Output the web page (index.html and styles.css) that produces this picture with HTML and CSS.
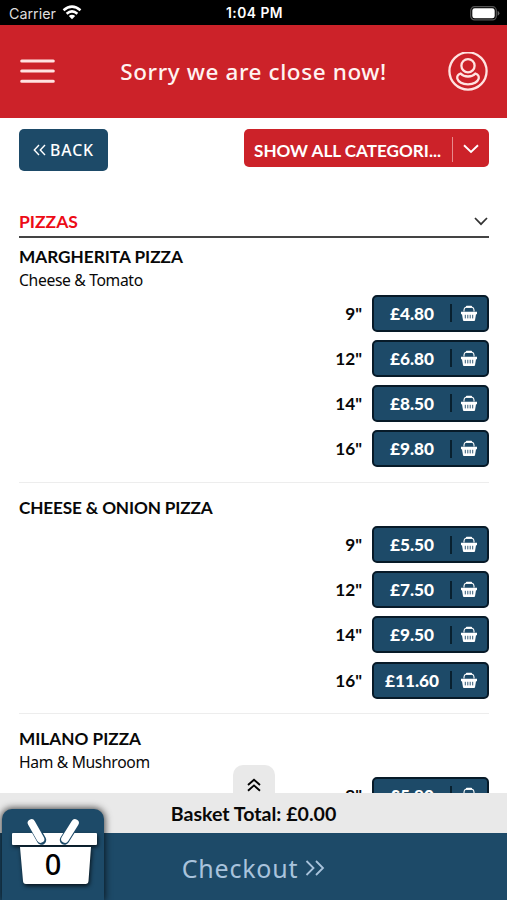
FILE: index.html
```html
<!DOCTYPE html>
<html lang="en">
<head>
<meta charset="utf-8">
<title>Menu</title>
<link rel="stylesheet" href="styles.css">
</head>
<body>
<svg width="0" height="0" class="defs">
  <symbol id="basket" viewBox="0 0 18 17">
    <path d="M4 6.5V5Q4 2.6 6 2.2H12Q14 2.6 14 5V6.5" fill="none" stroke="currentColor" stroke-width="1.1"/>
    <path d="M6.8 1.7H11.2" stroke="currentColor" stroke-width="1.9" stroke-linecap="round"/>
    <path d="M1 6.7H17V9.2H16L15 15.2Q14.9 16 14 16H4Q3.1 16 3 15.2L2 9.2H1Z" fill="currentColor"/>
    <path d="M5.3 9.8V13.4M7.8 9.8V13.4M10.2 9.8V13.4M12.7 9.8V13.4" stroke="#1d4a68" stroke-width=".9"/>
  </symbol>
</svg>
<div class="screen">
  <div class="status">
    <div class="carrier">Carrier
      <svg width="20" height="15" viewBox="0 0 20 15" fill="none" stroke="#fff" stroke-width="2.5"><path d="M1.5 5.3Q10-2.1 18.5 5.3M4.6 8.7Q10 4.1 15.4 8.7"/><path d="M6.8 11.1Q10 8.3 13.2 11.1L10 14.3Z" fill="#fff" stroke="none"/></svg>
    </div>
    <div class="clock">1:04 PM</div>
    <svg class="battery" width="30" height="15" viewBox="0 0 30 15"><rect x=".7" y=".7" width="25.6" height="13.2" rx="3.8" fill="none" stroke="#555" stroke-width="1.2"/><rect x="2.3" y="2.3" width="22.4" height="10" rx="2.4" fill="#fff"/><path d="M27.6 5Q29.4 5.5 29.4 7.3T27.6 9.8Z" fill="#666"/></svg>
  </div>
  <header class="header">
    <svg width="35" height="25" viewBox="0 0 35 25" stroke="#ffe3e1" stroke-width="3" stroke-linecap="round"><path d="M1.7 2H33.3M1.7 12.1H33.3M1.7 22.2H33.3"/></svg>
    <h1>Sorry we are close now!</h1>
    <svg width="40" height="40" viewBox="0 0 40 40" fill="none" stroke="#ffe3e1" stroke-width="2.3"><circle cx="20" cy="19" r="18.6"/><circle cx="20" cy="13.7" r="6.6"/><path d="M12.6 21.5C10 22.4 8.9 24.4 9.3 26.7C10.5 30.2 15 32.3 20 32.3S29.5 30.2 30.7 26.7C31.1 24.4 30 22.4 27.4 21.5C25.7 23.5 23.2 24.5 20 24.5S14.3 23.5 12.6 21.5Z"/></svg>
  </header>
  <main class="content">
    <div class="toolbar">
      <button class="back"><svg width="13" height="12" viewBox="0 0 13 12" fill="none" stroke="#fff" stroke-width="1.4"><path d="M6 1L1.3 6L6 11M12 1L7.3 6L12 11"/></svg><span>BACK</span></button>
      <button class="select"><span>SHOW ALL CATEGORI...</span><i></i><svg width="16" height="10" viewBox="0 0 16 10" fill="none" stroke="#fff" stroke-width="1.9"><path d="M1 1.3L8 8L15 1.3"/></svg></button>
    </div>
    <div class="category"><h2>PIZZAS</h2><svg width="14" height="9" viewBox="0 0 14 9" fill="none" stroke="#333" stroke-width="1.7"><path d="M1 1L7 7.2L13 1"/></svg></div>
    <section class="item first">
      <h3>MARGHERITA PIZZA</h3>
      <p>Cheese &amp; Tomato</p>
      <div class="options">
        <div class="option"><span>9"</span><button><b>£4.80</b><i></i><svg width="18" height="17"><use href="#basket"/></svg></button></div>
        <div class="option"><span>12"</span><button><b>£6.80</b><i></i><svg width="18" height="17"><use href="#basket"/></svg></button></div>
        <div class="option"><span>14"</span><button><b>£8.50</b><i></i><svg width="18" height="17"><use href="#basket"/></svg></button></div>
        <div class="option"><span>16"</span><button><b>£9.80</b><i></i><svg width="18" height="17"><use href="#basket"/></svg></button></div>
      </div>
    </section>
    <section class="item">
      <h3 class="long">CHEESE &amp; ONION PIZZA</h3>
      <div class="options">
        <div class="option"><span>9"</span><button><b>£5.50</b><i></i><svg width="18" height="17"><use href="#basket"/></svg></button></div>
        <div class="option"><span>12"</span><button><b>£7.50</b><i></i><svg width="18" height="17"><use href="#basket"/></svg></button></div>
        <div class="option"><span>14"</span><button><b>£9.50</b><i></i><svg width="18" height="17"><use href="#basket"/></svg></button></div>
        <div class="option"><span>16"</span><button><b>£11.60</b><i></i><svg width="18" height="17"><use href="#basket"/></svg></button></div>
      </div>
    </section>
    <section class="item">
      <h3>MILANO PIZZA</h3>
      <p>Ham &amp; Mushroom</p>
      <div class="options">
        <div class="option"><span>9"</span><button><b>£5.80</b><i></i><svg width="18" height="17"><use href="#basket"/></svg></button></div>
      </div>
    </section>
  </main>
  <footer class="footer">
    <div class="total">Basket Total: £0.00</div>
    <div class="checkout"><span>Checkout</span><svg width="20" height="16" viewBox="0 0 20 16" fill="none" stroke="#a9c3dc" stroke-width="1.8"><path d="M1.5 1L8.5 8L1.5 15M11 1L18 8L11 15"/></svg></div>
    <div class="tab"><svg width="14" height="14" viewBox="0 0 14 14" fill="none" stroke="#000" stroke-width="1.9"><path d="M1 7L7 1.7L13 7M1 12.7L7 7.4L13 12.7"/></svg></div>
    <div class="basket">
      <svg width="102" height="91" viewBox="0 0 102 91">
        <g class="shape" fill="#fff">
          <path d="M18 38H89L86.5 72Q86.3 75 83.5 75H24Q21.2 75 21 72Z"/>
          <rect x="10" y="24" width="85" height="12" rx="1"/>
        </g>
        <g stroke-linecap="round"><path d="M30.5 15L39.5 31M72.5 15L62.5 31" stroke="#1d4a68" stroke-width="9.5"/><path d="M29.5 14L38.5 30M73 14L63 30" stroke="#fff" stroke-width="7.6"/></g>
        <text x="51" y="66" text-anchor="middle">0</text>
      </svg>
    </div>
  </footer>
</div>
</body>
</html>
```

FILE: styles.css
```css
* { box-sizing: border-box; }
body { margin: 0; background: #fff; color: #080808; font-family: Lato, sans-serif; }
h1, h2, h3, p { margin: 0; }
button { margin: 0; padding: 0; border: 0; font: inherit; color: #fff; }
svg { display: block; flex: none; }
.defs { position: absolute; }
.screen { position: relative; width: 507px; height: 900px; overflow: hidden; }

.status { display: grid; grid-template-columns: 1fr auto 1fr; align-items: center; height: 25px; padding: 2px 7px 0 9px; background: #000; color: #fff; font: 14px/23px Inter, sans-serif; }
.carrier { display: flex; align-items: center; gap: 6px; color: #ddd; font-size: 14.3px; }
.carrier svg { margin-top: -3px; }
.clock { font-weight: 600; font-size: 13.8px; letter-spacing: .5px; }
.battery { justify-self: end; }

.header { display: flex; align-items: center; justify-content: space-between; height: 93px; padding: 0 19px 0 20px; background: #cc2229; }
.header h1 { padding-left: 4px; color: #fff3f1; font: 500 22.5px/30px "Noto Sans", sans-serif; letter-spacing: .6px; white-space: nowrap; }

.content { padding: 11px 18px 0 19px; }
.toolbar { display: flex; justify-content: space-between; align-items: flex-start; height: 82px; }
.back { display: flex; align-items: center; justify-content: center; gap: 4px; width: 89px; height: 42px; border-radius: 5px; background: #1d4a68; font: 500 15.8px/20px "Noto Sans", sans-serif; letter-spacing: .9px; }
.select { display: flex; align-items: center; width: 245px; height: 38px; padding: 5px 10px 0; border-radius: 5px; background: #cc2229; font-weight: 700; font-size: 17.1px; white-space: nowrap; }
.select span { width: 198px; text-align: left; }
.select i { width: 1px; height: 25px; margin: -3px 10px 0 0; background: #e78a8c; }
.select svg { margin-top: -3px; }

.category { display: flex; align-items: center; justify-content: space-between; height: 27px; padding: 0 1px 4px 0; border-bottom: 2px solid #444; }
.category h2 { color: #ed0c16; font-size: 17.5px; line-height: 22px; }

.item { padding-top: 14px; border-top: 1px solid #ededed; }
.item.first { padding-top: 8px; border-top: 0; }
.item h3 { font-size: 17.2px; line-height: 22px; }
.item h3.long { letter-spacing: -.15px; }
.item p { height: 19px; font: 15.7px/24px "Noto Sans", sans-serif; letter-spacing: -.35px; }
.options { display: grid; gap: 8.2px; padding: 7.5px 0 14.5px; }
.option { display: flex; align-items: center; justify-content: flex-end; gap: 10px; font-weight: 700; font-size: 17.2px; }
.option button { display: flex; align-items: center; width: 117px; height: 37px; border: 2px solid #071a28; border-radius: 5px; background: #1d4a68; }
.option b { width: 76px; text-align: center; }
.option button i { width: 2px; height: 18px; background: #08202f; }
.option button svg { margin-left: 8px; }

.footer { position: absolute; left: 0; right: 0; bottom: 0; height: 107px; }
.total { height: 40px; background: #e9e9e9; text-align: center; font-weight: 700; font-size: 19.6px; line-height: 41px; }
.checkout { display: flex; align-items: center; justify-content: center; gap: 7px; height: 67px; padding-top: 2px; background: #1d4a68; color: #a9c3dc; font: 25px/34px "Noto Sans", sans-serif; letter-spacing: .8px; }
.tab { position: absolute; left: 233px; top: -28px; display: flex; justify-content: center; width: 42px; height: 29px; padding-top: 13px; border-radius: 10px 10px 0 0; background: #e9e9e9; }
.basket { position: absolute; left: 2px; top: 16px; width: 102px; height: 91px; border-radius: 10px 10px 0 0; background: #1d4a68; box-shadow: 0 0 7px 1px rgba(0,0,0,.7); }
.basket .shape { filter: drop-shadow(1px 2px 2px rgba(0,0,0,.75)); }
.basket text { font: 500 29px "Noto Sans", sans-serif; fill: #000; }
```
